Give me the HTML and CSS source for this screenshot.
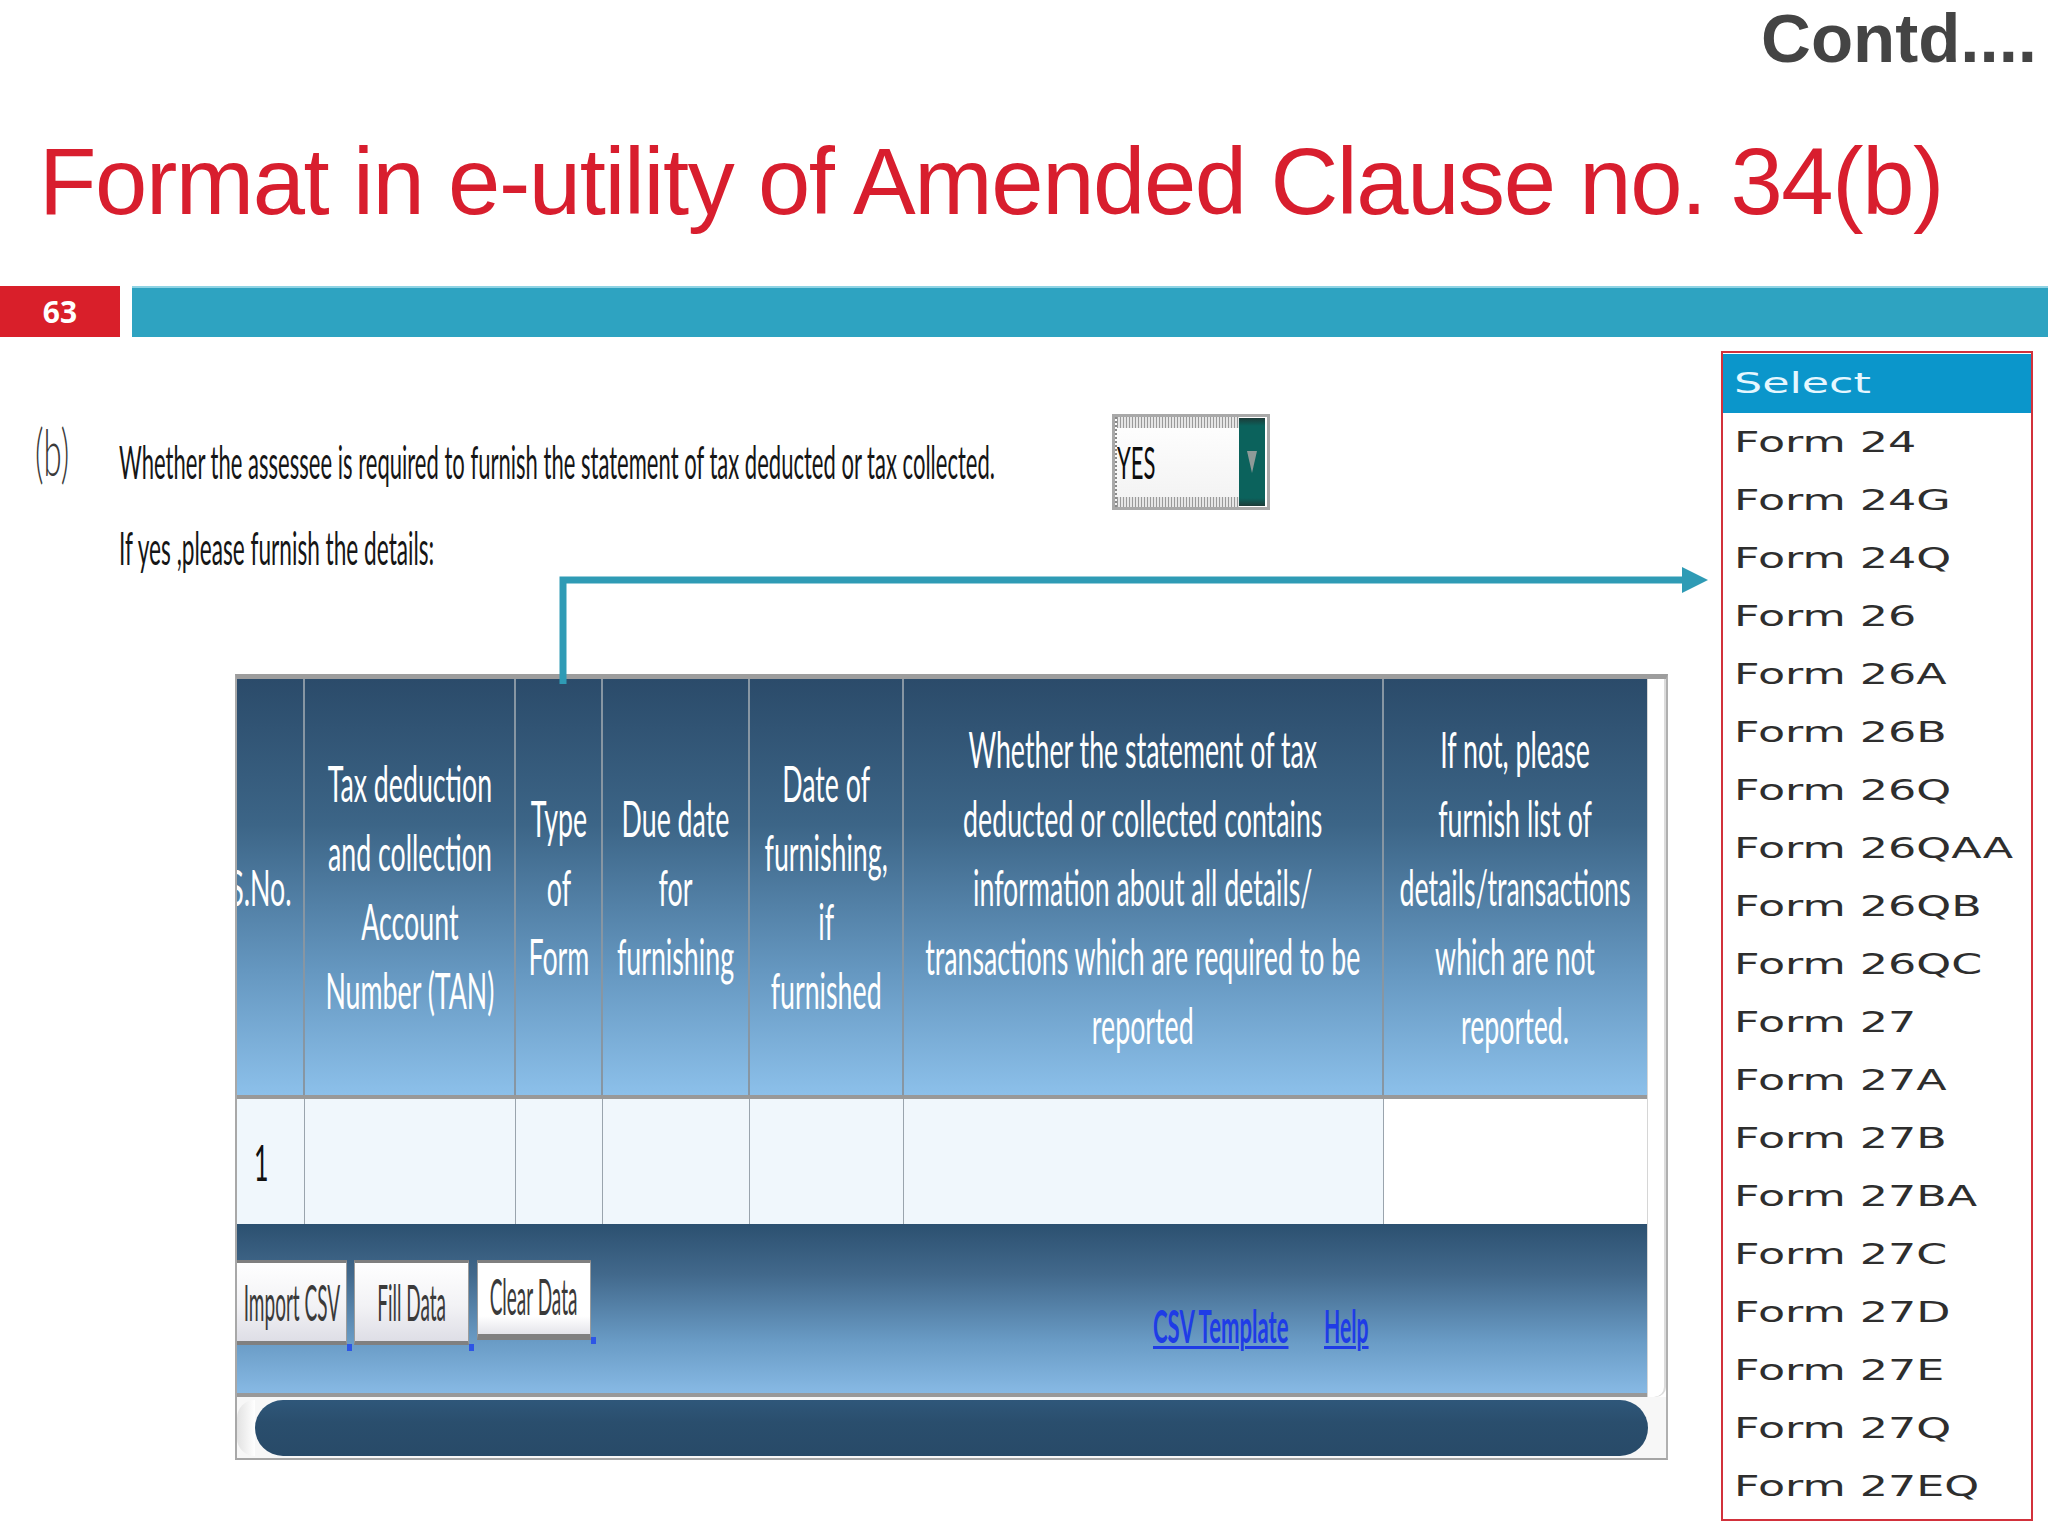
FILE: index.html
```html
<!DOCTYPE html>
<html lang="en">
<head>
<meta charset="utf-8">
<title>Format in e-utility of Amended Clause no. 34(b)</title>
<link rel="stylesheet" href="styles.css">
</head>
<body>
<div class="page">
  <header class="top">
    <div class="contd">Contd....</div>
    <h1 class="title">Format in e-utility of Amended Clause no. 34(b)</h1>
    <div class="bar">
      <div class="num">63</div>
      <div class="band"></div>
    </div>
  </header>

  <main class="content">
    <div class="q-row">
      <div class="q-label"><span class="sq sq-b">(b)</span></div>
      <div class="q-text"><span class="sq sq-body">Whether the assessee is required to furnish the statement of tax deducted or tax collected.</span></div>
      <div class="yes-select">
        <div class="yes-field"><span class="sq sq-yes">YES</span></div>
        <div class="yes-btn">
          <svg width="10" height="22" viewBox="0 0 10 22"><polygon points="0,0 10,0 5,22" fill="#8e9a98"/></svg>
        </div>
      </div>
    </div>
    <div class="q-row2">
      <div class="q-text"><span class="sq sq-body2">If yes ,please furnish the details:</span></div>
    </div>

    <div class="tbl-frame">
      <div class="tbl-upper">
        <div class="tbl-col">
          <div class="grid thead">
            <div class="th th-first"><span class="th-t th-t-right">S.No.</span></div>
            <div class="th"><span class="th-t">Tax deduction<br>and collection<br>Account<br>Number (TAN)</span></div>
            <div class="th"><span class="th-t">Type<br>of<br>Form</span></div>
            <div class="th"><span class="th-t">Due date<br>for<br>furnishing</span></div>
            <div class="th"><span class="th-t">Date of<br>furnishing,<br>if<br>furnished</span></div>
            <div class="th"><span class="th-t">Whether the statement of tax<br>deducted or collected contains<br>information about all details/<br>transactions which are required to be<br>reported</span></div>
            <div class="th th-last"><span class="th-t">If not, please<br>furnish list of<br>details/transactions<br>which are not<br>reported.</span></div>
          </div>
          <div class="sep"></div>
          <div class="grid tbody">
            <div class="td td-first"><span class="sq sq-cell">1</span></div>
            <div class="td"></div>
            <div class="td"></div>
            <div class="td"></div>
            <div class="td"></div>
            <div class="td"></div>
            <div class="td td-last"></div>
          </div>
          <div class="tfoot">
            <div class="btn btn-import"><span class="sq sq-btn">Import CSV</span></div>
            <div class="btn btn-fill"><span class="sq sq-btn">Fill Data</span></div>
            <div class="btn btn-clear"><span class="sq sq-btn">Clear Data</span></div>
            <div class="links">
              <div class="link link-csv"><span class="sq sq-link">CSV Template</span></div>
              <div class="link link-help"><span class="sq sq-link sq-help">Help</span></div>
            </div>
          </div>
          <div class="sep"></div>
        </div>
        <div class="vscroll"></div>
      </div>
      <div class="hscroll">
        <div class="hs-cap"></div>
        <div class="hs-bar"></div>
      </div>
    </div>
  </main>

  <div class="dropdown">
    <div class="dd-head"><span class="dd-t">Select</span></div>
    <div class="dd-item"><span class="dd-t">Form 24</span></div>
    <div class="dd-item"><span class="dd-t">Form 24G</span></div>
    <div class="dd-item"><span class="dd-t">Form 24Q</span></div>
    <div class="dd-item"><span class="dd-t">Form 26</span></div>
    <div class="dd-item"><span class="dd-t">Form 26A</span></div>
    <div class="dd-item"><span class="dd-t">Form 26B</span></div>
    <div class="dd-item"><span class="dd-t">Form 26Q</span></div>
    <div class="dd-item"><span class="dd-t">Form 26QAA</span></div>
    <div class="dd-item"><span class="dd-t">Form 26QB</span></div>
    <div class="dd-item"><span class="dd-t">Form 26QC</span></div>
    <div class="dd-item"><span class="dd-t">Form 27</span></div>
    <div class="dd-item"><span class="dd-t">Form 27A</span></div>
    <div class="dd-item"><span class="dd-t">Form 27B</span></div>
    <div class="dd-item"><span class="dd-t">Form 27BA</span></div>
    <div class="dd-item"><span class="dd-t">Form 27C</span></div>
    <div class="dd-item"><span class="dd-t">Form 27D</span></div>
    <div class="dd-item"><span class="dd-t">Form 27E</span></div>
    <div class="dd-item"><span class="dd-t">Form 27Q</span></div>
    <div class="dd-item"><span class="dd-t">Form 27EQ</span></div>
  </div>

  <svg class="connector" width="2048" height="1536" viewBox="0 0 2048 1536">
    <path d="M563 684 V580 H1686" fill="none" stroke="#2f9bb5" stroke-width="7"/>
    <polygon points="1682,567 1708,580 1682,593" fill="#2f9bb5"/>
  </svg>
</div>
</body>
</html>
```

FILE: styles.css
```css
* { box-sizing: border-box; }

html, body {
  margin: 0;
  padding: 0;
  background: #ffffff;
}

.page {
  position: relative;
  width: 2048px;
  height: 1536px;
  overflow: hidden;
  background: #ffffff;
  font-family: "Liberation Sans", Arial, sans-serif;
}

/* ---------- top header ---------- */
.contd {
  height: 69px;
  line-height: 77px;
  font-size: 69px;
  font-weight: 700;
  color: #444444;
  text-align: right;
  padding-right: 11px;
  white-space: nowrap;
}

.title {
  margin: 66px 0 0 0;
  padding-left: 39px;
  font-family: "Liberation Sans", Arial, sans-serif;
  font-weight: 400;
  font-size: 94px;
  line-height: 94px;
  letter-spacing: -1.4px;
  color: #d81e2e;
  white-space: nowrap;
}

.bar {
  display: flex;
  height: 51px;
  margin-top: 57px;
}

.num {
  width: 120px;
  background: #d91f2a;
  color: #ffffff;
  font-family: "Open Sans", sans-serif;
  font-weight: 700;
  font-size: 30px;
  display: flex;
  align-items: center;
  justify-content: center;
}

.band {
  flex: 1;
  margin-left: 12px;
  background: #2ea3c1;
  box-shadow: inset 0 2px 0 #8fd3e4;
}

/* ---------- squeezed text helpers ---------- */
.sq {
  display: inline-block;
  white-space: nowrap;
  font-family: Lato, "Open Sans", sans-serif;
  transform-origin: left center;
}

.sq-body {
  font-size: 46px;
  line-height: 46px;
  color: #161616;
  transform: scaleX(0.479);
}

.sq-body2 {
  display: inline-block;
  white-space: nowrap;
  font-family: Lato, "Open Sans", sans-serif;
  transform-origin: left center;
  font-size: 46px;
  line-height: 46px;
  color: #161616;
  transform: scaleX(0.492);
}

.sq-b {
  font-size: 66px;
  line-height: 66px;
  color: #3a3a3a;
  font-weight: 300;
  transform: scaleX(0.5);
}

.sq-yes {
  font-size: 44px;
  line-height: 44px;
  color: #0d0d0d;
  transform: scaleX(0.5);
}

.sq-cell {
  font-size: 50px;
  line-height: 50px;
  color: #111111;
  transform: scaleX(0.5);
}

.sq-btn {
  font-size: 50px;
  line-height: 50px;
  color: #3a3a3a;
  transform: scaleX(0.38);
  transform-origin: center center;
}

.sq-link {
  font-size: 46px;
  line-height: 46px;
  font-weight: 700;
  color: #1f3ce6;
  text-decoration: underline;
  text-decoration-thickness: 3px;
  text-underline-offset: 3px;
  transform: scaleX(0.48);
}

.sq-help {
  transform: scaleX(0.46);
}

/* ---------- question rows ---------- */
.content {
  display: flex;
  flex-direction: column;
}

.q-row {
  display: flex;
  align-items: center;
  height: 96px;
  margin-top: 77px;
}

.q-label {
  width: 119px;
  padding-left: 35px;
  padding-bottom: 22px;
}

.q-text {
  width: 993px;
  height: 46px;
  padding-bottom: 6px;
}

.q-row2 {
  display: flex;
  margin-top: 15px;
  padding-left: 119px;
}

/* YES select */
.yes-select {
  display: flex;
  width: 158px;
  height: 96px;
  border: 3px solid #a9a9a9;
  background: #ffffff;
}

.yes-field {
  flex: 1;
  display: flex;
  align-items: center;
  border-left: 2px dotted #8a8a8a;
  background:
    repeating-linear-gradient(90deg, #9a9a9a 0 1px, #e6e6e6 1px 3px) top / 100% 11px no-repeat,
    repeating-linear-gradient(90deg, #9a9a9a 0 1px, #e6e6e6 1px 3px) bottom / 100% 10px no-repeat,
    linear-gradient(#ffffff, #f2f2f2);
}

.yes-btn {
  width: 26px;
  margin: 1px 2px 1px 0;
  display: flex;
  align-items: center;
  justify-content: center;
  background: linear-gradient(#1c3b38 0, #0b625c 9%, #0b625c 91%, #1c3b38 100%);
}

/* ---------- table ---------- */
.tbl-frame {
  margin-top: 103px;
  margin-left: 235px;
  width: 1433px;
  border-top: 5px solid #9d9d9d;
  border-left: 2px solid #a8a8a8;
  border-right: 2px solid #b0b0b0;
  border-bottom: 2px solid #a5a5a5;
  background: #ffffff;
}

.tbl-upper {
  display: flex;
}

.tbl-col {
  width: 1410px;
  display: flex;
  flex-direction: column;
}

.vscroll {
  flex: 1;
  background: #ffffff;
  border-left: 1px solid #d6d6d6;
  border-bottom-right-radius: 10px;
  box-shadow: inset -2px 0 0 #dcdcdc;
}

.grid {
  display: grid;
  grid-template-columns: 68px 211px 87px 147px 154px 480px 263px;
}

.thead {
  height: 416px;
  background: linear-gradient(#2b4b6a 0%, #3c6587 35%, #6597c0 70%, #8cc0ea 100%);
}

.th {
  display: flex;
  align-items: center;
  justify-content: center;
  border-right: 2px solid #8796a3;
  overflow: visible;
}

.th-last {
  border-right: none;
}

.th-first {
  justify-content: flex-end;
  padding-right: 12px;
  overflow: hidden;
}

.th-t {
  flex: none;
  display: inline-block;
  white-space: nowrap;
  text-align: center;
  font-family: Lato, "Open Sans", sans-serif;
  font-size: 50px;
  line-height: 69px;
  color: #ffffff;
  transform: scaleX(0.535);
  transform-origin: center center;
}

.th-t-right {
  transform-origin: right center;
}

.sep {
  height: 4px;
  background: #999999;
}

.tbody {
  height: 125px;
}

.td {
  background: #f0f7fc;
  border-right: 1px solid #9aa4ad;
  display: flex;
  align-items: center;
}

.td-first {
  padding-left: 17px;
}

.td-last {
  background: #ffffff;
  border-right: none;
}

.tfoot {
  height: 169px;
  display: flex;
  align-items: flex-start;
  background: linear-gradient(#2c5070 0%, #42698c 30%, #6a9cc6 70%, #87b9e4 100%);
}

.btn {
  position: relative;
  height: 85px;
  margin-top: 36px;
  display: flex;
  align-items: center;
  justify-content: center;
  border: 1px solid #9c9c9c;
  border-top: 3px solid #7f7f7f;
  border-bottom: 4px solid #808080;
  background: linear-gradient(#ffffff 0%, #f2f2f5 55%, #dedee6 100%);
}

.btn::after {
  content: "";
  position: absolute;
  right: -6px;
  bottom: -10px;
  width: 5px;
  height: 7px;
  background: #2d55e6;
}

.btn-import {
  width: 110px;
  border-left: none;
}

.btn-fill {
  width: 115px;
  margin-left: 7px;
}

.btn-clear {
  width: 114px;
  margin-left: 8px;
  height: 80px;
  border-bottom-width: 6px;
  background: linear-gradient(#ffffff 0%, #ffffff 75%, #e4e4ea 100%);
  padding-bottom: 6px;
}

.links {
  display: flex;
  margin-left: 562px;
  margin-top: 79px;
}

.link {
  height: 46px;
}

.link-csv {
  width: 136px;
}

.link-help {
  width: 45px;
  margin-left: 35px;
}

.hscroll {
  height: 61px;
  display: flex;
  align-items: center;
  padding: 0 18px 0 0;
  background: #f7f7f7;
}

.hs-cap {
  width: 18px;
  height: 56px;
  border-radius: 20px 0 0 20px;
  background: linear-gradient(90deg, #e2e2e2, #ffffff);
}

.hs-bar {
  flex: 1;
  height: 56px;
  border-radius: 28px / 28px;
  background: linear-gradient(#2f577a 0%, #2a4e6d 40%, #284a68 100%);
}

/* ---------- dropdown list ---------- */
.dropdown {
  position: absolute;
  left: 1721px;
  top: 351px;
  width: 312px;
  height: 1170px;
  padding-top: 1px;
  border: 2px solid #d2313b;
  background: #ffffff;
}

.dd-head {
  height: 59px;
  background: #0b96cb;
  display: flex;
  align-items: center;
  padding-left: 11px;
}

.dd-head .dd-t {
  color: #e6f7ff;
}

.dd-item {
  height: 58px;
  display: flex;
  align-items: center;
  padding-left: 11px;
}

.dd-t {
  display: inline-block;
  white-space: nowrap;
  font-family: "DejaVu Sans", Verdana, sans-serif;
  font-size: 29px;
  line-height: 29px;
  color: #2e2e2e;
  transform: scaleX(1.53);
  transform-origin: left center;
}

/* ---------- connector arrow ---------- */
.connector {
  position: absolute;
  left: 0;
  top: 0;
  pointer-events: none;
}
```
